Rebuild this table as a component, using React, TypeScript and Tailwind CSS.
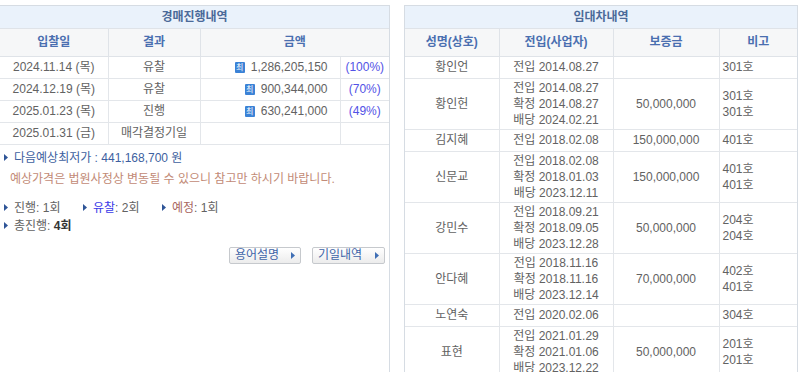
import { Fragment } from "react";

const font = "font-['Liberation_Sans','Noto_Sans_CJK_KR',sans-serif]";

interface IBid {
  date: string;
  result: string;
  amount: string;
  rate: string;
}

interface ITenant {
  name: string;
  moves: string[];
  deposit: string;
  notes: string[];
}

const bids: IBid[] = [
  { date: "2024.11.14 (목)", result: "유찰", amount: "1,286,205,150", rate: "(100%)" },
  { date: "2024.12.19 (목)", result: "유찰", amount: "900,344,000", rate: "(70%)" },
  { date: "2025.01.23 (목)", result: "진행", amount: "630,241,000", rate: "(49%)" },
  { date: "2025.01.31 (금)", result: "매각결정기일", amount: "", rate: "" },
];

const tenants: ITenant[] = [
  { name: "황인언", moves: ["전입 2014.08.27"], deposit: "", notes: ["301호"] },
  {
    name: "황인헌",
    moves: ["전입 2014.08.27", "확정 2014.08.27", "배당 2024.02.21"],
    deposit: "50,000,000",
    notes: ["301호", "301호"],
  },
  { name: "김지혜", moves: ["전입 2018.02.08"], deposit: "150,000,000", notes: ["401호"] },
  {
    name: "신문교",
    moves: ["전입 2018.02.08", "확정 2018.01.03", "배당 2023.12.11"],
    deposit: "150,000,000",
    notes: ["401호", "401호"],
  },
  {
    name: "강민수",
    moves: ["전입 2018.09.21", "확정 2018.09.05", "배당 2023.12.28"],
    deposit: "50,000,000",
    notes: ["204호", "204호"],
  },
  {
    name: "안다혜",
    moves: ["전입 2018.11.16", "확정 2018.11.16", "배당 2023.12.14"],
    deposit: "70,000,000",
    notes: ["402호", "401호"],
  },
  { name: "노연숙", moves: ["전입 2020.02.06"], deposit: "", notes: ["304호"] },
  {
    name: "표현",
    moves: ["전입 2021.01.29", "확정 2021.01.06", "배당 2023.12.22"],
    deposit: "50,000,000",
    notes: ["201호", "201호"],
  },
];

const Bullet = () => (
  <svg width="4" height="7" viewBox="0 0 4 7" className="inline-block mr-[6px] mb-[1px]">
    <polygon points="0,0 4,3.5 0,7" fill="#2f5597" />
  </svg>
);

const SmallArrow = () => (
  <svg width="4" height="7" viewBox="0 0 4 7" className="inline-block">
    <polygon points="0,0 4,3.5 0,7" fill="#3f6fb5" />
  </svg>
);

const MinIcon = () => (
  <span className="inline-flex items-center justify-center w-[10px] h-[11px] bg-[#3b82d6] text-white text-[8px] leading-none rounded-[1px] mr-[6px] align-middle">
    최
  </span>
);

const th = "border border-[#dfe3e8] bg-[#f6f7f8] text-[#4a6fb0] font-bold text-[12px] h-[27px]";
// no colour here, each cell sets its own
const td = "border border-[#e3e6ea] text-[12px] h-[22px] py-px leading-[16px]";
const gray = "text-[#626262]";

const App = () => {
  return (
    <div className={`w-[800px] h-[372px] overflow-hidden bg-white flex items-start pt-[5px] ${font}`}>
      {/* left: 경매진행내역 */}
      <div className="w-[390px] h-[367px] border-t border-r border-[#d6dce3] flex flex-col">
        <div className="h-[23px] bg-[#eaf2fb] border-b border-[#dfe3e8] flex items-center justify-center text-[12px] font-bold text-[#4b6a99]">
          경매진행내역
        </div>
        <table className="w-full table-fixed border-collapse">
          <colgroup>
            <col className="w-[108px]" />
            <col className="w-[92px]" />
            <col className="w-[140px]" />
            <col />
          </colgroup>
          <thead>
            <tr>
              <th className={`${th} border-l-0 border-t-0`}>입찰일</th>
              <th className={`${th} border-t-0`}>결과</th>
              <th colSpan={2} className={`${th} border-t-0 border-r-0`}>
                금액
              </th>
            </tr>
          </thead>
          <tbody>
            {bids.map((b, i) => (
              <tr key={i}>
                <td className={`${td} ${gray} border-l-0 text-center h-[21.5px]`}>{b.date}</td>
                <td className={`${td} ${gray} text-center`}>{b.result}</td>
                <td className={`${td} ${gray} text-right pr-[12px]`}>
                  {b.amount && (
                    <>
                      <MinIcon />
                      {b.amount}
                    </>
                  )}
                </td>
                <td className={`${td} border-r-0 text-center text-[#5252e6]`}>{b.rate}</td>
              </tr>
            ))}
          </tbody>
        </table>

        <div className="pl-[4px] pt-[5px] text-[12px] leading-[16px]">
          <div className="text-[#3d5fa0]">
            <Bullet />
            다음예상최저가 : 441,168,700 원
          </div>
          <div className="pl-[6px] mt-[5px] text-[#c28a76]">
            예상가격은 법원사정상 변동될 수 있으니 참고만 하시기 바랍니다.
          </div>
          <div className={`mt-[13px] flex ${gray}`}>
            <div className="w-[79px]">
              <Bullet />
              진행: 1회
            </div>
            <div className="w-[79px]">
              <Bullet />
              <span className="text-[#3a3ae8]">유찰</span>: 2회
            </div>
            <div>
              <Bullet />
              <span className="text-[#a8675f]">예정</span>: 1회
            </div>
          </div>
          <div className={`mt-[2px] ${gray}`}>
            <Bullet />
            총진행: <span className="font-bold text-[#333]">4회</span>
          </div>
        </div>

        <div className="flex justify-end gap-[11px] pr-[4px] mt-[13px]">
          <button className="w-[72px] h-[17px] border border-[#c6c9cd] rounded-[2px] bg-gradient-to-b from-white to-[#ececec] flex items-center justify-between px-[5px] text-[12px] leading-none text-[#3f64a8]">
            용어설명
            <SmallArrow />
          </button>
          <button className="w-[73px] h-[17px] border border-[#c6c9cd] rounded-[2px] bg-gradient-to-b from-white to-[#ececec] flex items-center justify-between px-[5px] text-[12px] leading-none text-[#3f64a8]">
            기일내역
            <SmallArrow />
          </button>
        </div>
      </div>

      <div className="w-[14px]" />

      {/* right: 임대차내역 */}
      <div className="w-[394px] border-t border-l border-r border-[#d6dce3] flex flex-col">
        <div className="h-[23px] bg-[#eaf2fb] border-b border-[#dfe3e8] flex items-center justify-center text-[12px] font-bold text-[#4b6a99]">
          임대차내역
        </div>
        <table className="w-full table-fixed border-collapse">
          <colgroup>
            <col className="w-[94px]" />
            <col className="w-[114px]" />
            <col className="w-[106px]" />
            <col />
          </colgroup>
          <thead>
            <tr>
              <th className={`${th} border-l-0 border-t-0`}>성명(상호)</th>
              <th className={`${th} border-t-0`}>전입(사업자)</th>
              <th className={`${th} border-t-0`}>보증금</th>
              <th className={`${th} border-t-0 border-r-0`}>비고</th>
            </tr>
          </thead>
          <tbody>
            {tenants.map((t, i) => (
              <tr key={i}>
                <td className={`${td} ${gray} border-l-0 text-center`}>{t.name}</td>
                <td className={`${td} ${gray} text-center`}>
                  {t.moves.map((m, j) => (
                    <Fragment key={j}>
                      {j > 0 && <br />}
                      {m}
                    </Fragment>
                  ))}
                </td>
                <td className={`${td} ${gray} text-center`}>{t.deposit}</td>
                <td className={`${td} ${gray} border-r-0 text-left pl-[3px]`}>
                  {t.notes.map((n, j) => (
                    <Fragment key={j}>
                      {j > 0 && <br />}
                      {n}
                    </Fragment>
                  ))}
                </td>
              </tr>
            ))}
          </tbody>
        </table>
      </div>
    </div>
  );
};

export default App;
